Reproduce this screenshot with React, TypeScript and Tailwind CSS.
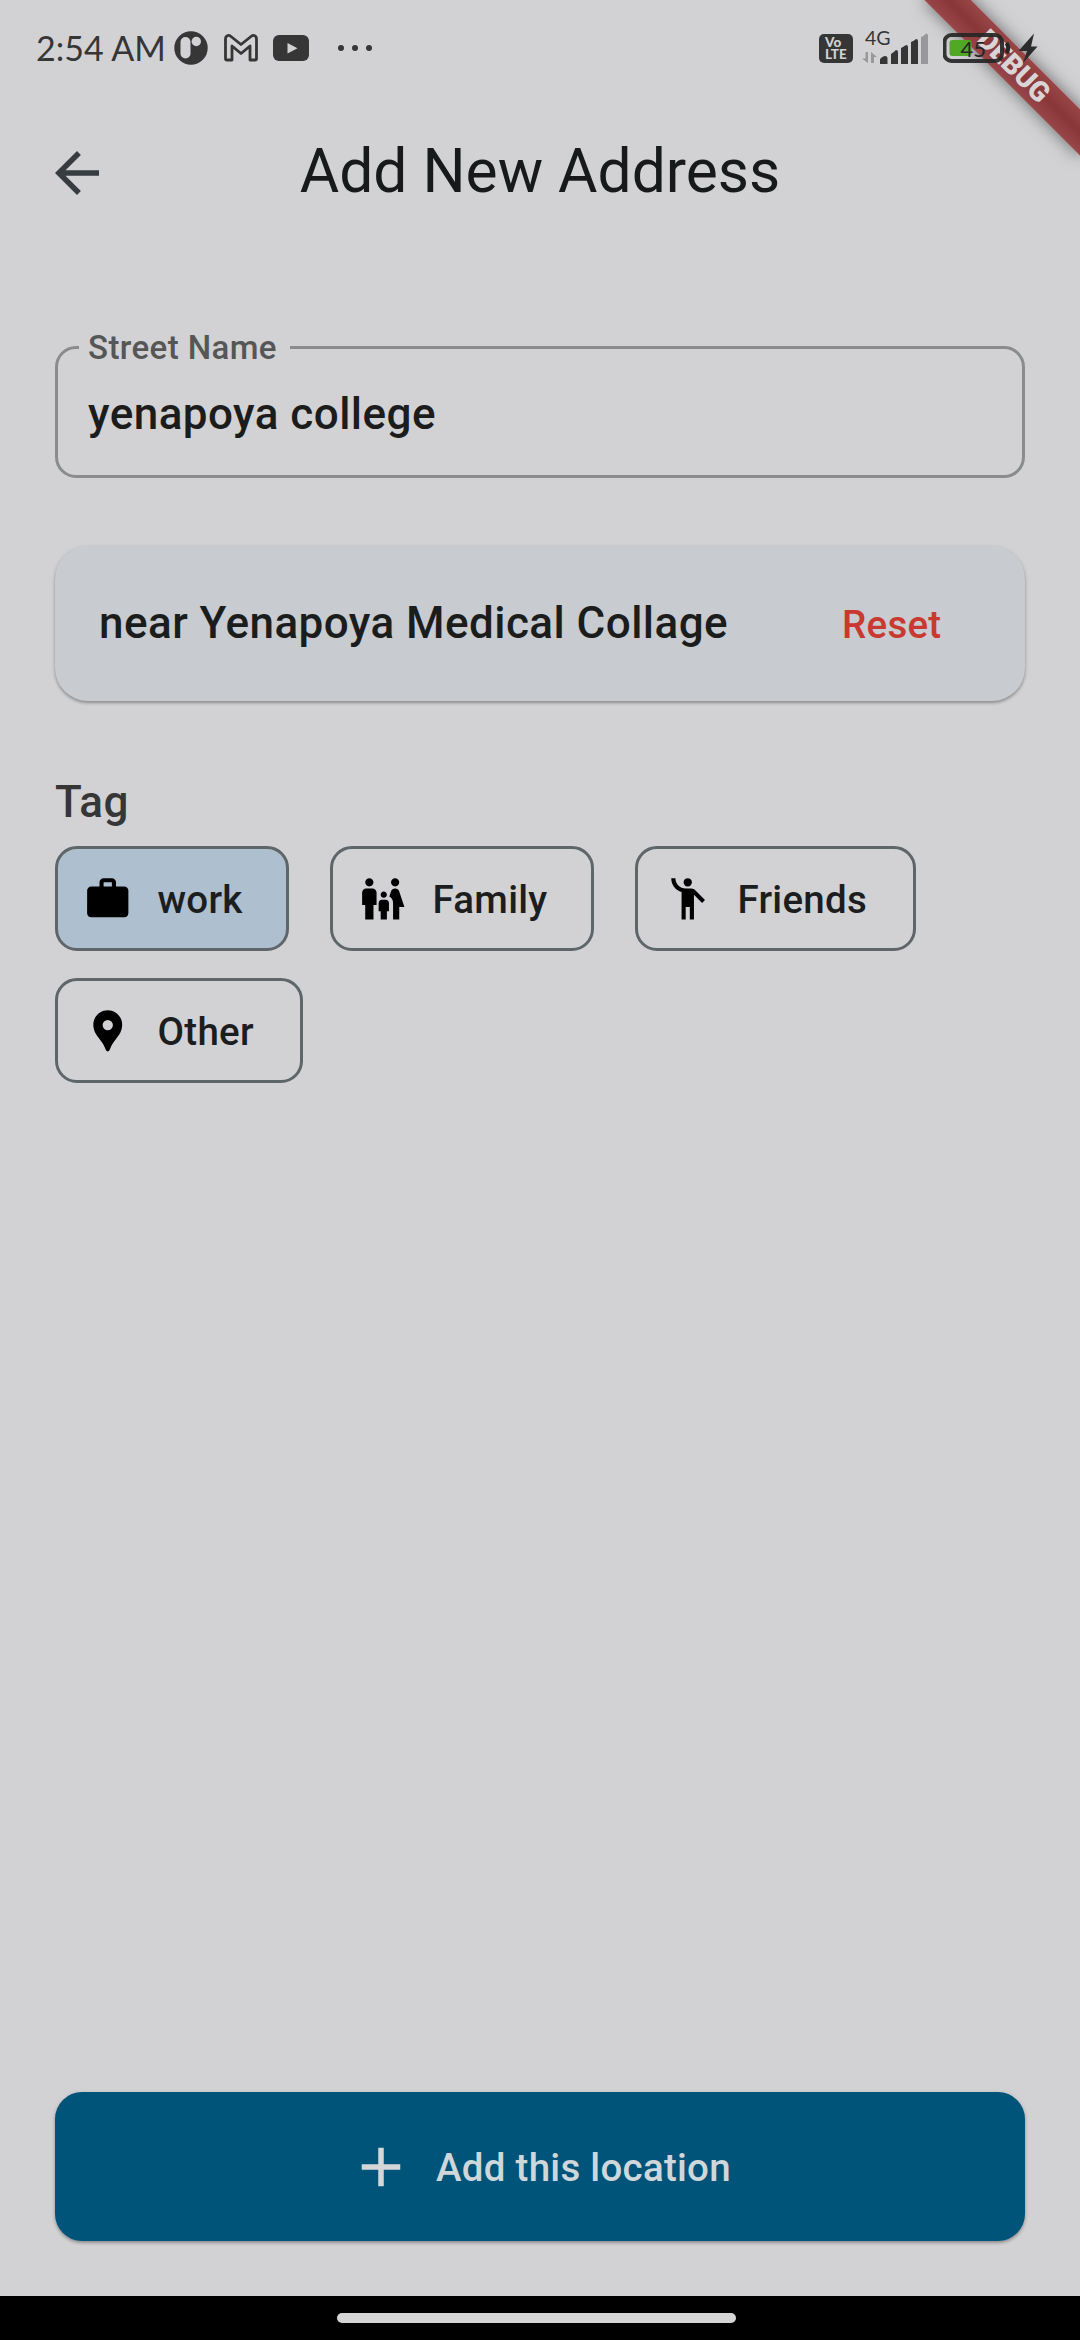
import React from "react";
import { MdWork, MdFamilyRestroom, MdEmojiPeople, MdLocationPin, MdArrowBack, MdAdd } from "react-icons/md";
import type { IconType } from "react-icons";

const tags: { label: string; Icon: IconType; width: string; selected?: boolean }[] = [
  { label: "work", Icon: MdWork, width: "w-[234px]", selected: true },
  { label: "Family", Icon: MdFamilyRestroom, width: "w-[264px]" },
  { label: "Friends", Icon: MdEmojiPeople, width: "w-[281px]" },
  { label: "Other", Icon: MdLocationPin, width: "w-[248px]" },
];

function DebugBanner() {
  return (
    <div className="pointer-events-none absolute top-0 right-0 h-[220px] w-[220px] overflow-hidden">
      <div className="absolute top-[77px] left-[110px] h-[33px] w-[220px] origin-[110px_-77px] rotate-45 bg-linear-to-b from-[#994649] via-[#893739] to-[#994649] text-center font-['Roboto'] text-[28px] leading-[33px] font-black text-[#d9d5d6] shadow-[0_0_17px_rgba(0,0,0,0.5)]">
        DEBUG
      </div>
    </div>
  );
}

function StatusBar() {
  return (
    <div className="relative flex h-[96px] shrink-0 text-[#363636]">
      <div className="flex h-[96px] items-center pl-[36px]">
        <span className="w-[138px] text-[34px] leading-none whitespace-nowrap font-['Lato']">2:54 AM</span>
        <svg className="h-[34px] w-[34px]" viewBox="0 0 34 34">
          <circle cx="17" cy="17" r="16.700" fill="#363636" />
          <rect x="6.500" y="6" width="10" height="21.500" rx="5" fill="#d2d2d4" />
          <circle cx="22.300" cy="10.500" r="4.700" fill="#d2d2d4" />
        </svg>
        <svg className="ml-[16px] h-[28px] w-[34px]" viewBox="0 0 34 28" fill="none" stroke="#363636" strokeWidth="2.800" strokeLinejoin="round">
          <path d="M1.500 24.500V5C1.500 1.500 4.500 0.500 7 2.500L17 10.500 27 2.500C29.500 0.500 32.500 1.500 32.500 5V24.500Q32.500 26 31 26H26V12L17 19.500 8 12V26H3Q1.500 26 1.500 24.500Z" />
        </svg>
        <svg className="ml-[15px] h-[26px] w-[36px]" viewBox="0 0 36 26">
          <rect width="36" height="26" rx="6" fill="#363636" />
          <path d="M14.500 8v10.500l10-5.250z" fill="#d2d2d4" />
        </svg>
        <span className="ml-[29px] flex gap-[8px]">
          <i className="size-[6px] rounded-full bg-[#363636]" />
          <i className="size-[6px] rounded-full bg-[#363636]" />
          <i className="size-[6px] rounded-full bg-[#363636]" />
        </span>
      </div>
      <div className="ml-auto flex h-[96px] items-center pr-[42px]">
        <span className="flex h-[29px] w-[34px] flex-col justify-center rounded-[5px] bg-[#363636] pl-[6px] font-['Lato'] text-[13.500px] leading-[12px] font-black text-[#d2d2d4]">
          <span>Vo</span>
          <span>LTE</span>
        </span>
        <div className="ml-[9px] h-[36px] w-[68px] pt-px">
          <div className="relative">
            <svg className="absolute top-[-1px] left-0 h-[36px] w-[68px]" viewBox="0 0 68 36">
              <path d="M3.500 22H6v11L0 28.500h3.500zM9 22l6 5h-3v6H9z" fill="#98989a" />
              <path d="M18 34v-4.500q1-2.500 5-3.500 2.500 0 2.500 2v6zM29 34V24q3-2 5-4 2 0 2 2v12zM39 34V18q3-1.500 5-3 2 0 2 2v17zM49 34V12q3-1 5-3 2 0 2 2v23z" fill="#363636" />
              <path d="M59 34V7q3-1 5-3.500 2 0 2 2V34z" fill="#98989a" />
            </svg>
            <span className="relative block pl-[3px] font-['Lato'] text-[19.500px] leading-[14px]">4G</span>
          </div>
        </div>
        <svg className="ml-[13px] h-[36px] w-[95px]" viewBox="0 0 95 36" fontFamily="Lato">
          <rect x="1.500" y="5" width="57.500" height="26" rx="7" fill="none" stroke="#262626" strokeOpacity="0.92" strokeWidth="4" />
          <rect x="6.500" y="10" width="22" height="16" rx="3" fill="#50a824" />
          <path d="M63.500 13q3.500 5 0 10" stroke="#262626" strokeWidth="4" fill="none" />
          <text x="17.500" y="27" fontSize="22" fill="#262626">45</text>
          <path d="M91 3.500L75.500 21h8.500l-4 12 14.500-16.500H88z" fill="#2c2c2c" />
        </svg>
      </div>
    </div>
  );
}

export default function App() {
  return (
    <div className="relative flex h-[2340px] w-[1080px] flex-col overflow-hidden bg-[#d2d2d4] font-['Roboto',sans-serif]">
      <DebugBanner />
      <StatusBar />
      <header className="relative flex h-[154px] shrink-0 items-center justify-center">
        <MdArrowBack className="absolute left-[44px] size-[66px] text-[#363c40]" />
        <h1 className="-mt-[4px] text-[60.500px] leading-[77px] text-[#18191b]">Add New Address</h1>
      </header>
      <main className="flex flex-1 flex-col px-[55px]">
        <fieldset className="mt-[76px] h-[152px] min-w-0 rounded-[21px] border-[3px] border-[#8a8b8c] pl-[21px]">
          <legend className="h-[43px] w-[211px] pl-[9px] text-[33px] leading-[43px] font-medium tracking-[0.400px] whitespace-nowrap text-[#565656]">Street Name</legend>
          <div className="mt-[19px] pl-[9px] text-[44px] leading-[52px] font-medium tracking-[0.450px] text-[#1c1c1c]">yenapoya college</div>
        </fieldset>
        <section className="mt-[68px] flex h-[155px] shrink-0 items-center rounded-[33px] bg-[#c8cbd0] pl-[44px] shadow-[0_2px_3px_rgba(0,0,0,0.28),0_1px_5px_rgba(0,0,0,0.08)]">
          <p className="-mt-[2px] w-[743px] text-[44px] font-medium tracking-[0.450px] text-[#1b1d1d]">near Yenapoya Medical Collage</p>
          <button className="mt-[2px] text-[38.500px] font-medium tracking-[0.270px] text-[#c9392f]">Reset</button>
        </section>
        <h2 className="mt-[75px] text-[44px] leading-[52px] font-medium tracking-[0.400px] text-[#363636]">Tag</h2>
        <div className="mt-[18px] flex flex-wrap gap-x-[41px] gap-y-[27px]">
          {tags.map(({ label, Icon, width, selected }) => (
            <button
              key={label}
              className={`flex h-[105px] items-center rounded-[22px] border-[3px] border-[#5f666a] pl-[25px] text-[38.500px] font-medium tracking-[0.270px] text-[#1c1d1e] ${width} ${selected ? "bg-[#aebfcf]" : ""}`}
            >
              <Icon className="size-[49.500px] shrink-0 text-black" />
              <span className="mt-[2px] ml-[25px]">{label}</span>
            </button>
          ))}
        </div>
        <button className="mt-auto mb-[55px] flex h-[149px] shrink-0 items-center rounded-[27px] bg-[#005479] pl-[293px] text-[38.500px] font-medium tracking-[0.270px] text-[#d0d7da] shadow-[0_2px_3px_rgba(0,0,0,0.25),0_1px_5px_rgba(0,0,0,0.1)]">
          <MdAdd className="size-[66px] text-[#d5d6d7]" />
          <span className="mt-[2px] ml-[22px]">Add this location</span>
        </button>
      </main>
      <footer className="h-[44px] shrink-0 bg-black pt-[17px] pl-[337px]">
        <div className="h-[10px] w-[399px] rounded-full bg-[#d5d5d5]" />
      </footer>
    </div>
  );
}
